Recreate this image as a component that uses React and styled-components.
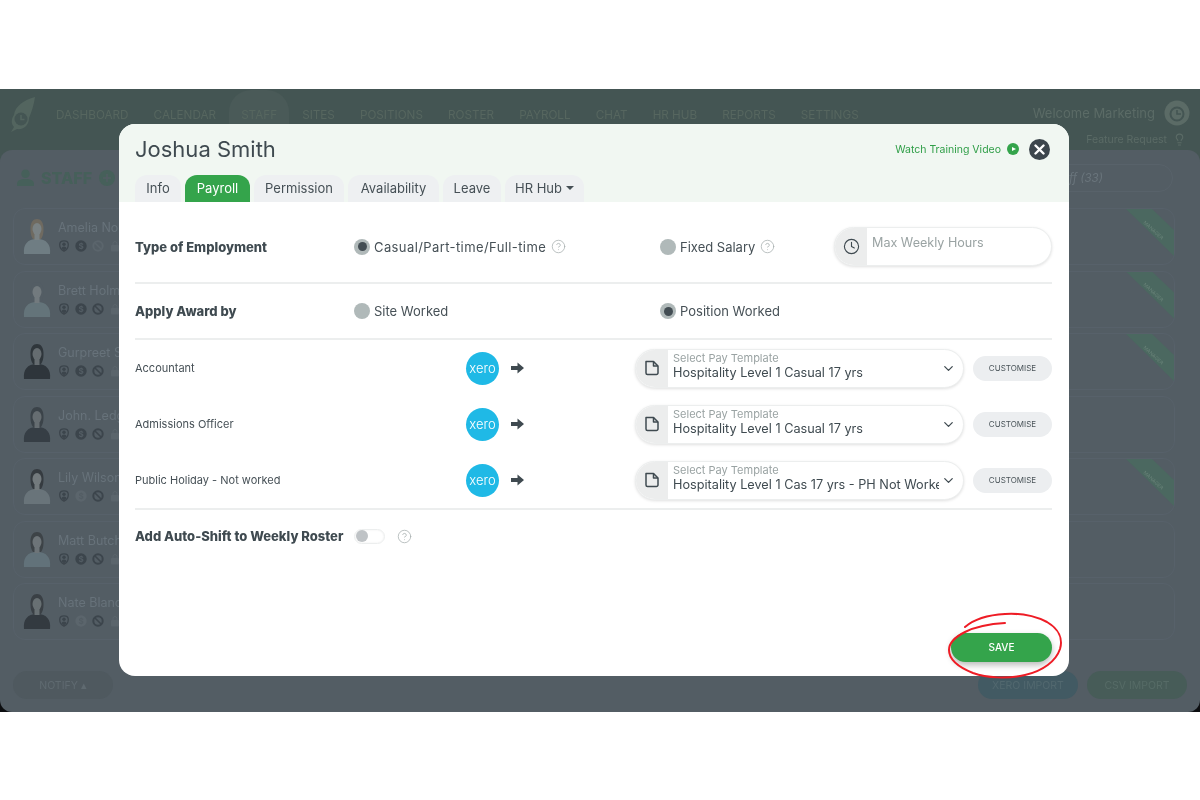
import styled, { createGlobalStyle } from "styled-components";
import { ChevronDown, CircleHelp, Clock, Plus, Lightbulb } from "lucide-react";

const Global = createGlobalStyle`
  html, body { margin: 0; padding: 0; background: #fff; }
  * { box-sizing: border-box; }
  body { font-family: Inter, "Open Sans", "Liberation Sans", sans-serif; color: #3f4a50; }
`;

const Page = styled.div`
  width: 1200px;
  height: 800px;
  padding-top: 89px;
  background: #fff;
  overflow: hidden;
`;

const Frame = styled.div`
  position: relative;
  height: 623px;
  background: linear-gradient(#445553 50%, #0c0e10 50%);
  filter: blur(0.3px);
`;

// ===== BACKDROP =====
const TopBar = styled.header`
  height: 61px;
  display: flex;
  align-items: center;
  padding: 0 10px 9px 10px;
  background: #445553;
`;

const Nav = styled.nav`
  display: flex;
  align-items: center;
  gap: 25.1px;
  margin-left: 20px;
`;

const NavItem = styled.span`
  position: relative;
  z-index: 0;
  font-size: 11.7px;
  color: #56665f;
  &::before {
    content: "";
    display: ${(p) => (p.$active ? "block" : "none")};
    position: absolute;
    left: -12px;
    right: -12px;
    top: -18px;
    bottom: -30px;
    background: #4a5a58;
    border-radius: 22px;
    z-index: -1;
  }
`;

const Welcome = styled.div`
  margin-left: auto;
  margin-bottom: 4px;
  display: flex;
  align-items: center;
  gap: 9px;
  font-size: 13px;
  color: #5b6b66;
`;

const FeatureRequest = styled.div`
  position: absolute;
  right: 14px;
  top: 44px;
  display: flex;
  align-items: center;
  gap: 6px;
  font-size: 10.5px;
  color: #5b6b66;
`;

const Panel = styled.section`
  height: 562px;
  display: flex;
  flex-direction: column;
  padding: 0 25px 13px 13px;
  background: #535d64;
  border-radius: 12px;
`;

const PanelHead = styled.div`
  height: 58px;
  flex: none;
  display: flex;
  align-items: center;
  padding: 0 2px 3px 4px;
  gap: 7px;
`;

const PanelTitle = styled.h2`
  margin: 0;
  font-size: 16px;
  font-weight: 800;
  color: #46605a;
`;

const AddCircle = styled.span`
  width: 16px;
  height: 16px;
  border-radius: 50%;
  background: #46605a;
  display: flex;
  align-items: center;
  justify-content: center;
  color: #535d64;
`;

const SearchBox = styled.div`
  margin-left: auto;
  width: 183px;
  height: 28px;
  border: 1px solid #58626a;
  border-radius: 14px;
  display: flex;
  align-items: center;
  padding-left: 18px;
  font-size: 11.5px;
  font-style: italic;
  color: #6a757c;
`;

const StaffList = styled.div`
  flex: 1;
  display: flex;
  flex-direction: column;
  gap: 5.5px;
  overflow: hidden;
`;

const StaffCard = styled.div`
  position: relative;
  flex: none;
  height: 57px;
  display: flex;
  align-items: center;
  gap: 6px;
  padding: 0 0 1px 8px;
  border: 1px solid #57616a;
  border-radius: 12px;
`;

const StaffName = styled.div`
  font-size: 12.5px;
  color: #67727a;
  margin-bottom: 5px;
`;

const StaffIcons = styled.div`
  display: flex;
  gap: 5px;
`;

const Ribbon = styled.div`
  position: absolute;
  top: 0;
  right: 0;
  width: 48px;
  height: 47px;
  background: #4b6860;
  clip-path: polygon(0 0, 26px 0, 100% 21px, 100% 100%);
  display: flex;
  align-items: center;
  justify-content: center;
  font-size: 5px;
  color: #6a8479;
  span { transform: translate(3px, -3px) rotate(43deg); }
`;

const PanelFoot = styled.div`
  flex: none;
  height: 50px;
  display: flex;
  align-items: flex-end;
  gap: 9px;
`;

const FootButton = styled.div`
  width: 100px;
  height: 28px;
  border-radius: 14px;
  display: flex;
  align-items: center;
  justify-content: center;
  font-size: 10.5px;
  background: ${(p) => p.$bg};
  color: ${(p) => p.$color};
  margin-left: ${(p) => (p.$push ? "auto" : "0")};
  margin-right: ${(p) => (p.$last ? "-12px" : "0")};
`;

// ===== MODAL =====
const Modal = styled.div`
  position: absolute;
  left: 119px;
  top: 35px;
  width: 950px;
  height: 552px;
  background: #fff;
  border-radius: 16px;
  display: flex;
  flex-direction: column;
`;

const ModalHead = styled.div`
  height: 78px;
  flex: none;
  display: flex;
  flex-direction: column;
  justify-content: space-between;
  padding: 11px 19px 0 16px;
  background: #f1f7f2;
  border-radius: 16px 16px 0 0;
`;

const HeadTop = styled.div`
  display: flex;
  align-items: center;
  justify-content: space-between;
`;

const Name = styled.h1`
  margin: 0;
  font-size: 22px;
  font-weight: 400;
  line-height: 28px;
  color: #3f4a50;
`;

const HeadActions = styled.div`
  display: flex;
  align-items: center;
  gap: 10px;
`;

const WatchLink = styled.a`
  display: flex;
  align-items: center;
  gap: 6px;
  font-size: 10.5px;
  color: #2f9e47;
`;

const PlayDot = styled.span`
  width: 12px;
  height: 12px;
  border-radius: 50%;
  background: #34a44b;
  display: flex;
  align-items: center;
  justify-content: center;
  &::after {
    content: "";
    margin-left: 1px;
    border-left: 4px solid #fff;
    border-top: 2.5px solid transparent;
    border-bottom: 2.5px solid transparent;
  }
`;

const CloseButton = styled.button`
  width: 21px;
  height: 21px;
  padding: 0;
  border: 0;
  border-radius: 50%;
  background: #3d464d;
  display: flex;
  align-items: center;
  justify-content: center;
`;

const Tabs = styled.div`
  display: flex;
  gap: 4px;
`;

const Tab = styled.div`
  height: 27px;
  width: ${(p) => p.$w}px;
  padding-bottom: 1px;
  display: flex;
  align-items: center;
  justify-content: center;
  gap: 4px;
  font-size: 13px;
  border-radius: 12px 12px 0 0;
  background: ${(p) => (p.$active ? "#34a44b" : "#eef0f2")};
  color: ${(p) => (p.$active ? "#fff" : "#465056")};
`;

const Caret = styled.span`
  border-top: 4px solid #465056;
  border-left: 4px solid transparent;
  border-right: 4px solid transparent;
`;

const ModalBody = styled.div`
  flex: 1;
  display: flex;
  flex-direction: column;
  padding: 0 17px 14px 16px;
`;

const OptionRow = styled.div`
  height: ${(p) => p.$h}px;
  padding-top: ${(p) => p.$pt}px;
  display: grid;
  grid-template-columns: 219px 306px 174px 1fr;
  align-items: center;
  border-bottom: 2px solid #eceeee;
`;

const RowLabel = styled.div`
  font-size: 13px;
  font-weight: 800;
  color: #3f4a50;
`;

const RadioWrap = styled.label`
  display: flex;
  align-items: center;
  gap: 4px;
  font-size: 13px;
  letter-spacing: ${(p) => p.$spacing || 0}px;
  color: #465056;
`;

const Radio = styled.span`
  width: 16px;
  height: 16px;
  border-radius: 50%;
  background: #b0b9b9;
  display: flex;
  align-items: center;
  justify-content: center;
  &::after {
    content: "";
    display: ${(p) => (p.$on ? "block" : "none")};
    width: 9px;
    height: 9px;
    border-radius: 50%;
    background: #434d53;
  }
`;

const HelpIcon = styled(CircleHelp)`
  margin-left: 1px;
  color: #a5adad;
`;

const Pill = styled.div`
  display: flex;
  height: ${(p) => p.$h}px;
  width: ${(p) => p.$w}px;
  border-radius: 20px;
  background: #fff;
  border: 1px solid #eceeee;
  box-shadow: 0 1px 3px rgba(0, 0, 0, 0.12);
  overflow: hidden;
`;

const PillIcon = styled.div`
  width: 32px;
  flex: none;
  background: #eceded;
  display: flex;
  align-items: center;
  justify-content: center;
  color: #3f4a50;
`;

const HoursInput = styled.input`
  flex: 1;
  min-width: 0;
  border: 0;
  outline: 0;
  background: transparent;
  padding: 0 5px 9px 5px;
  font: inherit;
  font-size: 12.6px;
  &::placeholder { color: #9aa3a3; }
`;

const PayList = styled.div`
  display: flex;
  flex-direction: column;
  border-bottom: 2px solid #eceeee;
`;

const PayRow = styled.div`
  height: 56px;
  display: grid;
  grid-template-columns: 331px 169px 329px 1fr;
  align-items: center;
`;

const PayName = styled.div`
  font-size: 11px;
  color: #465056;
`;

const XeroCell = styled.div`
  display: flex;
  align-items: center;
  gap: 12px;
`;

const XeroBadge = styled.div`
  width: 33px;
  height: 33px;
  border-radius: 50%;
  background: #1fb9e6;
  color: #fff;
  display: flex;
  align-items: center;
  justify-content: center;
  font-size: 13px;
  font-weight: 300;
`;

const SelectText = styled.div`
  flex: 1;
  min-width: 0;
  padding: 2px 0 0 5px;
  margin-right: 17px;
  overflow: hidden;
  white-space: nowrap;
`;

const SelectHint = styled.div`
  font-size: 11px;
  line-height: 13px;
  color: #9aa3a3;
`;

const SelectValue = styled.div`
  font-size: 12.7px;
  line-height: 15px;
  color: #3f4a50;
`;

const Chevron = styled(ChevronDown)`
  align-self: center;
  flex: none;
  margin: 0 7px 0 -15px;
  color: #3f4a50;
`;

const CustomiseButton = styled.button`
  justify-self: end;
  width: 79px;
  height: 25px;
  border: 0;
  border-radius: 13px;
  background: #eceef0;
  font: inherit;
  font-size: 8px;
  color: #4a5459;
`;

const AutoRow = styled.div`
  height: 52px;
  display: flex;
  align-items: center;
  gap: 11px;
`;

const Toggle = styled.span`
  width: 31px;
  height: 15px;
  border-radius: 8px;
  border: 1px solid #eceeee;
  box-shadow: inset 0 0 2px rgba(0, 0, 0, 0.08);
  display: flex;
  align-items: center;
  padding-left: 1px;
  &::after {
    content: "";
    width: 12px;
    height: 12px;
    border-radius: 50%;
    background: #bfc3c6;
  }
`;

const SaveBar = styled.div`
  position: relative;
  margin-top: auto;
  display: flex;
  justify-content: flex-end;
`;

const SaveButton = styled.button`
  width: 101px;
  height: 29px;
  padding-bottom: 2px;
  border: 0;
  border-radius: 15px;
  background: #34a44b;
  color: #fff;
  font: inherit;
  font-size: 10px;
  font-weight: 500;
  box-shadow: 0 3px 6px rgba(0, 0, 0, 0.28);
`;

const Scribble = styled.svg`
  position: absolute;
  right: -13px;
  top: -23px;
  pointer-events: none;
`;

// ===== ICONS =====
function LogoMark() {
  return (
    <svg width="26" height="36" viewBox="0 0 26 36">
      <path d="M25 0C14 3 5 9 4 18c-3 4-3 9 0 12L1 35l6-3c7 1 12-4 12-11C22 14 24 7 25 0z" fill="#53655f" />
      <circle cx="11" cy="22" r="6.5" fill="#445553" />
      <path d="M11 18v4.5h3.5" stroke="#53655f" strokeWidth="1.6" fill="none" />
    </svg>
  );
}

function WelcomeMark() {
  return (
    <svg width="26" height="26" viewBox="0 0 26 26">
      <circle cx="13" cy="13" r="12.5" fill="#5b6b66" />
      <circle cx="13" cy="14" r="6.5" fill="none" stroke="#445553" strokeWidth="2" />
      <path d="M13 10v4h4" stroke="#445553" strokeWidth="1.6" fill="none" />
    </svg>
  );
}

function PersonIcon() {
  return (
    <svg width="17" height="17" viewBox="0 0 16 16" fill="#46605a">
      <circle cx="8" cy="4.5" r="4" />
      <path d="M0 16v-2c0-3 3-4.5 8-4.5s8 1.5 8 4.5v2z" />
    </svg>
  );
}

function StatusIcon({ kind, off }) {
  const color = off ? "#5b656c" : "#3c454c";
  return (
    <svg width="12" height="12" viewBox="0 0 12 12">
      {kind === "user" && (
        <>
          <path d="M6 .8c2.6 0 4.3 1.5 4.3 3.7 0 3.2-1.9 5.6-4.3 6.7-2.4-1.1-4.3-3.5-4.3-6.7C1.7 2.3 3.4.8 6 .8z" fill="none" stroke={color} strokeWidth="1.3" />
          <circle cx="6" cy="4.2" r="1.7" fill={color} />
          <path d="M3.4 8.4c.4-1.3 1.4-2 2.6-2s2.2.7 2.6 2L6 10.2z" fill={color} />
        </>
      )}
      {kind === "pay" && (
        <>
          <circle cx="6" cy="6" r="5.7" fill={color} />
          <text x="6" y="8.8" fontSize="8" fontWeight="700" textAnchor="middle" fill="#535d64">$</text>
        </>
      )}
      {kind === "block" && (
        <>
          <circle cx="6" cy="6" r="4.7" fill="none" stroke={color} strokeWidth="2" />
          <path d="M3 3l6 6" stroke={color} strokeWidth="1.6" />
        </>
      )}
      {kind === "lock" && (
        <>
          <rect x="2" y="5" width="8" height="6.5" rx="1" fill={color} />
          <path d="M4 5V3.5a2 2 0 0 1 4 0V5" stroke={color} fill="none" />
        </>
      )}
    </svg>
  );
}

function Avatar({ hair, suit, skin }) {
  return (
    <svg width="30" height="36" viewBox="0 0 30 36">
      <path d="M2 36c-1-9 3-15 13-15s14 6 13 15z" fill={suit} />
      <path d="M8.5 12C8 4 11.5 1 15 1s7 3 6.5 11c0 4-1 7-2.5 9h-8c-1.5-2-2.5-5-2.5-9z" fill={hair} />
      <ellipse cx="15" cy="11" rx="4.5" ry="6" fill={skin} />
      <rect x="12.5" y="15" width="5" height="7" fill={skin} />
    </svg>
  );
}

function PageIcon() {
  return (
    <svg width="16" height="16" viewBox="0 0 16 16" fill="none" stroke="#3f4a50" strokeWidth="1.5" strokeLinejoin="round">
      <path d="M2 1.5h7.5l4.5 4.5v7a1.5 1.5 0 0 1-1.5 1.5h-9A1.5 1.5 0 0 1 2 13z" />
      <path d="M9.5 1.5V6H14" />
    </svg>
  );
}

function ArrowIcon() {
  return (
    <svg width="13" height="12" viewBox="0 0 13 12" fill="#3f4a50">
      <path d="M0 4h6.5V.5L13 6l-6.5 5.5V8H0z" />
    </svg>
  );
}

function CrossIcon() {
  return (
    <svg width="11" height="11" viewBox="0 0 11 11" stroke="#fff" strokeWidth="2.4" strokeLinecap="round">
      <path d="M1.5 1.5l8 8M9.5 1.5l-8 8" />
    </svg>
  );
}

// ===== DATA =====
const navItems = ["DASHBOARD", "CALENDAR", "STAFF", "SITES", "POSITIONS", "ROSTER", "PAYROLL", "CHAT", "HR HUB", "REPORTS", "SETTINGS"];

const staff = [
  { name: "Amelia Nolan", hair: "#6f6a60", suit: "#6f7d83", skin: "#7a8284", ribbon: true, blockOff: true },
  { name: "Brett Holmes", hair: "#535d64", suit: "#64747a", skin: "#727a7e", ribbon: true },
  { name: "Gurpreet Singh", hair: "#2f363b", suit: "#2e353b", skin: "#656c70", ribbon: true },
  { name: "John. Ledger", hair: "#3b4349", suit: "#363e45", skin: "#666d71" },
  { name: "Lily Wilson", hair: "#353b40", suit: "#69747a", skin: "#737a7d", ribbon: true, payOff: true },
  { name: "Matt Butcher", hair: "#3d4347", suit: "#62727a", skin: "#6d7478" },
  { name: "Nate Blanchard", hair: "#3a4045", suit: "#333a40", skin: "#687073", payOff: true },
];

const tabs = [
  { label: "Info", w: 46 },
  { label: "Payroll", w: 65, active: true },
  { label: "Permission", w: 90 },
  { label: "Availability", w: 91 },
  { label: "Leave", w: 58 },
  { label: "HR Hub", w: 79, caret: true },
];

const payRows = [
  { name: "Accountant", value: "Hospitality Level 1 Casual 17 yrs" },
  { name: "Admissions Officer", value: "Hospitality Level 1 Casual 17 yrs" },
  { name: "Public Holiday - Not worked", value: "Hospitality Level 1 Cas 17 yrs - PH Not Worked" },
];

export default function App() {
  return (
    <Page>
      <Global />
      <Frame>
        <TopBar>
          <LogoMark />
          <Nav>
            {navItems.map((item) => (
              <NavItem key={item} $active={item === "STAFF"}>{item}</NavItem>
            ))}
          </Nav>
          <Welcome>
            Welcome Marketing
            <WelcomeMark />
          </Welcome>
        </TopBar>
        <FeatureRequest>
          Feature Request
          <Lightbulb size={13} />
        </FeatureRequest>

        <Panel>
          <PanelHead>
            <PersonIcon />
            <PanelTitle>STAFF</PanelTitle>
            <AddCircle><Plus size={12} strokeWidth={3} /></AddCircle>
            <SearchBox>Search Staff (33)</SearchBox>
          </PanelHead>
          <StaffList>
            {staff.map((s) => (
              <StaffCard key={s.name}>
                <Avatar hair={s.hair} suit={s.suit} skin={s.skin} />
                <div>
                  <StaffName>{s.name}</StaffName>
                  <StaffIcons>
                    <StatusIcon kind="user" />
                    <StatusIcon kind="pay" off={s.payOff} />
                    <StatusIcon kind="block" off={s.blockOff} />
                    <StatusIcon kind="lock" off />
                  </StaffIcons>
                </div>
                {s.ribbon && <Ribbon><span>MANAGER</span></Ribbon>}
              </StaffCard>
            ))}
          </StaffList>
          <PanelFoot>
            <FootButton $bg="#4f595f" $color="#5f6a70">NOTIFY ▴</FootButton>
            <FootButton $bg="#425a63" $color="#52686f" $push>XERO IMPORT</FootButton>
            <FootButton $bg="#475c58" $color="#566b66" $last>CSV IMPORT</FootButton>
          </PanelFoot>
        </Panel>

        <Modal>
          <ModalHead>
            <HeadTop>
              <Name>Joshua Smith</Name>
              <HeadActions>
                <WatchLink>Watch Training Video <PlayDot /></WatchLink>
                <CloseButton aria-label="Close"><CrossIcon /></CloseButton>
              </HeadActions>
            </HeadTop>
            <Tabs>
              {tabs.map((t) => (
                <Tab key={t.label} $w={t.w} $active={t.active}>
                  {t.label}
                  {t.caret && <Caret />}
                </Tab>
              ))}
            </Tabs>
          </ModalHead>

          <ModalBody>
            <OptionRow $h={82} $pt={9}>
              <RowLabel>Type of Employment</RowLabel>
              <RadioWrap $spacing={0.4}>
                <Radio $on />
                Casual/Part-time/Full-time
                <HelpIcon size={15} strokeWidth={1.2} />
              </RadioWrap>
              <RadioWrap>
                <Radio />
                Fixed Salary
                <HelpIcon size={15} strokeWidth={1.2} />
              </RadioWrap>
              <Pill $w={218} $h={39}>
                <PillIcon><Clock size={17} strokeWidth={1.6} /></PillIcon>
                <HoursInput placeholder="Max Weekly Hours" />
              </Pill>
            </OptionRow>

            <OptionRow $h={56} $pt={0}>
              <RowLabel>Apply Award by</RowLabel>
              <RadioWrap>
                <Radio />
                Site Worked
              </RadioWrap>
              <RadioWrap>
                <Radio $on />
                Position Worked
              </RadioWrap>
            </OptionRow>

            <PayList>
              {payRows.map((row) => (
                <PayRow key={row.name}>
                  <PayName>{row.name}</PayName>
                  <XeroCell>
                    <XeroBadge>xero</XeroBadge>
                    <ArrowIcon />
                  </XeroCell>
                  <Pill $w={329} $h={39}>
                    <PillIcon><PageIcon /></PillIcon>
                    <SelectText>
                      <SelectHint>Select Pay Template</SelectHint>
                      <SelectValue>{row.value}</SelectValue>
                    </SelectText>
                    <Chevron size={15} strokeWidth={2} />
                  </Pill>
                  <CustomiseButton>CUSTOMISE</CustomiseButton>
                </PayRow>
              ))}
            </PayList>

            <AutoRow>
              <RowLabel>Add Auto-Shift to Weekly Roster</RowLabel>
              <Toggle />
              <HelpIcon size={15} strokeWidth={1.2} />
            </AutoRow>

            <SaveBar>
              <SaveButton>SAVE</SaveButton>
              <Scribble width="120" height="72" viewBox="0 0 120 72" fill="none">
                <path
                  d="M60 13C42 14 28 18 20 22 10 27 4 33 4 40c0 9 9 17 24 23 14 5 34 6 52 2 18-4 31-14 35-26 3-10-1-20-13-27C90 6 75 3 60 4 42 5 28 10 20 17"
                  stroke="#ee1c25"
                  strokeWidth="2"
                  strokeLinecap="round"
                />
              </Scribble>
            </SaveBar>
          </ModalBody>
        </Modal>
      </Frame>
    </Page>
  );
}
